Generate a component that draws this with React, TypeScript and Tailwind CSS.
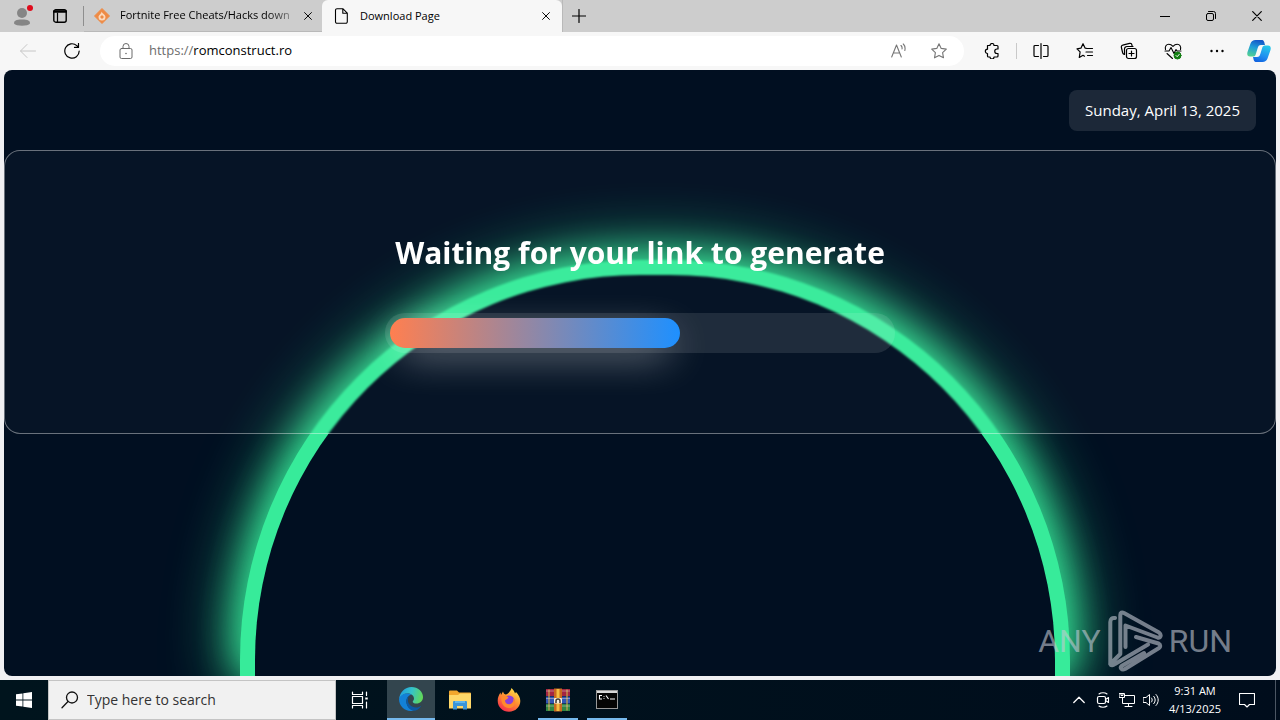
import type { ReactNode } from "react";

interface IconProps {
  size?: number;
  box?: number;
  className?: string;
  children: ReactNode;
}

const Icon = ({ size = 16, box = 16, className = "", children }: IconProps) => (
  <svg
    width={size}
    height={size}
    viewBox={`0 0 ${box} ${box}`}
    fill="none"
    stroke="currentColor"
    strokeWidth="1"
    strokeLinecap="round"
    strokeLinejoin="round"
    aria-hidden="true"
    className={`shrink-0 ${className}`}
  >
    {children}
  </svg>
);

const CloseIcon = ({ size = 8 }: { size?: number }) => (
  <Icon size={size} box={10}>
    <path d="M0.7 0.7l8.6 8.6M9.3 0.7L0.7 9.3" strokeWidth="1.2" />
  </Icon>
);

const toolbarButtons = [
  {
    label: "Split screen",
    icon: (
      <Icon size={18} box={18}>
        <path d="M6.500 3.500H3a1 1 0 0 0-1 1v9a1 1 0 0 0 1 1H6.500M11.500 3.500H15a1 1 0 0 1 1 1v9a1 1 0 0 1-1 1H11.500M9 1.500v15" strokeWidth="1.2" />
      </Icon>
    ),
  },
  {
    label: "Favorites",
    icon: (
      <Icon size={18} box={18}>
        <path d="M11 6.500L9.200 6.200L7 1.700L4.900 6.200L1 6.800l3.100 3.100l-0.800 5.600L7 13.300l1.500 0.900M11.500 6.500h5M10 10h6.500M11.500 13.500h5" strokeWidth="1.2" />
      </Icon>
    ),
  },
  {
    label: "Collections",
    icon: (
      <Icon size={18} box={18}>
        <rect x="6.500" y="6.500" width="10" height="10" rx="2" strokeWidth="1.2" />
        <path d="M11.500 9v5M9 11.500h5M4.500 12.500C3.500 12.300 3 11.800 2.700 11L1.400 5.500a1.800 1.800 0 0 1 1.300-2.300L9.600 1.400a1.800 1.800 0 0 1 2.200 1.300l0.400 1.500M4.500 12.500V7a2.500 2.500 0 0 1 2.500-2.500h6" strokeWidth="1.2" />
      </Icon>
    ),
  },
  {
    label: "Browser essentials",
    icon: (
      <Icon size={18} box={18}>
        <path d="M1.500 7.500C0.700 4.500 2.300 2.300 4.800 2.300C6.800 2.300 8 3.300 9 4.400C10 3.300 11.200 2.300 13.200 2.300C15.700 2.300 17.300 4.500 16.500 7.500M1 9h4l2-3.500l3 6l2-4l1 1.500h4M3 11.500l5.500 5" strokeWidth="1.100" />
        <circle cx="13.500" cy="13.500" r="3.500" fill="#107c10" stroke="#107c10" />
        <path d="M12 13.500l1.200 1.200l2-2.300" stroke="#fff" />
      </Icon>
    ),
  },
  {
    label: "Settings and more",
    icon: (
      <Icon size={14} box={14}>
        <g fill="currentColor" stroke="none">
          <circle cx="1.500" cy="7" r="1.200" />
          <circle cx="7" cy="7" r="1.200" />
          <circle cx="12.500" cy="7" r="1.200" />
        </g>
      </Icon>
    ),
  },
];

const TabStrip = () => (
  <div className="flex h-8 items-stretch bg-[#cdcdcd] text-[11px] text-black">
    <button aria-label="Profile" className="flex w-11 items-center justify-center">
      <svg width="22" height="24" viewBox="0 0 22 24" aria-hidden="true">
        <circle cx="11" cy="9" r="5" fill="#858585" />
        <path d="M3 19.500C3 16.500 5 15.500 11 15.500S19 16.500 19 19.500C17 22.500 5 22.500 3 19.500Z" fill="#858585" />
        <circle cx="19" cy="4" r="3" fill="#e00b1c" />
      </svg>
    </button>
    <button aria-label="Workspaces" className="flex w-8 items-center justify-center">
      <Icon size={14} box={14}>
        <rect x="0.800" y="0.800" width="12.400" height="12.400" rx="2" strokeWidth="1.400" />
        <path d="M1 2.500h12" strokeWidth="2.500" />
        <path d="M4.500 4v9" strokeWidth="1.200" />
      </Icon>
    </button>
    <div className="my-1.5 ml-[7px] w-px bg-[#8e8e8e]" />
    <div className="flex w-[238px] items-center border-b border-[#b9b9b9] px-2.5">
      <svg width="16" height="16" viewBox="0 0 16 16" className="shrink-0" aria-hidden="true">
        <path d="M8 0.500L15.500 8L8 15.500L0.500 8Z" fill="#ee8b46" stroke="#ee8b46" strokeLinejoin="round" />
        <path d="M7.500 3.500C8 5.500 11.500 6.500 11.500 9A3.500 3.500 0 0 1 4.500 9C4.500 7 7.500 6 7.500 3.500Z" fill="#fbd9bd" />
        <path d="M8 7L10 9L8 11L6 9Z" fill="#ee8b46" />
      </svg>
      <span className="ml-2.5 flex-1 whitespace-nowrap [mask-image:linear-gradient(to_right,black_80%,transparent)]">
        Fortnite Free Cheats/Hacks down
      </span>
      <button aria-label="Close tab">
        <CloseIcon />
      </button>
    </div>
    <div className="flex w-[240px] items-center rounded-t-md bg-[#f7f7f7] px-3">
      <Icon size={16}>
        <path d="M3 0.700h5.800l4.500 4.500v8.600a1.500 1.500 0 0 1-1.500 1.500H3a1.500 1.500 0 0 1-1.500-1.500V2.200a1.500 1.500 0 0 1 1.500-1.500ZM8.800 0.700v4.500h4.500" strokeWidth="1.100" />
      </Icon>
      <span className="ml-2.5 flex-1">Download Page</span>
      <button aria-label="Close tab">
        <CloseIcon />
      </button>
    </div>
    <button aria-label="New tab" className="flex w-8 items-center justify-center border-l border-[#b9b9b9]">
      <Icon size={14} box={14}>
        <path d="M7 0.500v13M0.500 7h13" strokeWidth="1.200" />
      </Icon>
    </button>
    <div className="ml-auto flex">
      <button aria-label="Minimize" className="flex w-[46px] items-center justify-center">
        <Icon size={10} box={10}>
          <path d="M0 5.500h10" />
        </Icon>
      </button>
      <button aria-label="Restore" className="flex w-[46px] items-center justify-center">
        <Icon size={10} box={10}>
          <rect x="0.500" y="2.500" width="7" height="7" rx="1.500" />
          <path d="M2.500 0.500H7.500a2 2 0 0 1 2 2V7.500" />
        </Icon>
      </button>
      <button aria-label="Close" className="flex w-[46px] items-center justify-center">
        <CloseIcon size={10} />
      </button>
    </div>
  </div>
);

const Toolbar = () => (
  <div className="flex h-[38px] items-center bg-[#f7f7f7] text-black">
    <button aria-label="Back" disabled className="ml-1.5 flex w-11 justify-center text-[#c6c6c6]">
      <Icon size={16}>
        <path d="M15.500 8H0.800M7 1.500L0.500 8L7 14.500" />
      </Icon>
    </button>
    <button aria-label="Refresh" className="flex w-11 justify-center">
      <Icon size={16}>
        <path d="M15.200 8A7.200 7.200 0 1 1 12.800 2.600L14.500 4.200M14.500 0.500v3.900h-4" strokeWidth="1.200" />
      </Icon>
    </button>
    <div className="ml-1.5 flex h-[30px] flex-1 items-center rounded-full bg-white">
      <Icon size={16} className="ml-[18px] text-[#6b6b6b]">
        <rect x="2" y="5.500" width="12" height="10" rx="1.500" />
        <path d="M5 5.500V3.500a3 3 0 0 1 6 0V5.500" />
        <circle cx="8" cy="10.500" r="0.800" fill="currentColor" stroke="none" />
      </Icon>
      <a href="https://romconstruct.ro" className="ml-[15px] flex-1 text-[13px]">
        <span className="text-[#6d6d6d]">https://</span>romconstruct.ro
      </a>
      <button aria-label="Read aloud" className="flex w-10 justify-center text-[#767676]">
        <Icon size={16}>
          <path d="M0.700 14L5.500 2L10.300 14M2.300 10h6.400M10 2.500c1 1 1.300 2.200 1 3.500M12.300 1c1.700 1.800 2.200 3.800 1.500 6.500" strokeWidth="1.100" />
        </Icon>
      </button>
      <button aria-label="Add to favorites" className="mr-[5px] flex w-10 justify-center text-[#767676]">
        <Icon size={16}>
          <path d="M8 0.800L10.200 5.400L15.300 6.100L11.600 9.700L12.500 14.800L8 12.400L3.500 14.800L4.400 9.700L0.700 6.100L5.800 5.400Z" strokeWidth="1.100" />
        </Icon>
      </button>
    </div>
    <button aria-label="Extensions" className="ml-1.5 flex w-11 justify-center">
      <Icon size={16}>
        <path d="M3.500 2.500H6a2 2 0 0 1 4 0H13a1 1 0 0 1 1 1V6H13a2 2 0 0 0 0 4.500H14V13a1 1 0 0 1-1 1H10a2 2 0 0 1-4 0H4.500a1 1 0 0 1-1-1V10.500a2.100 2.100 0 0 1 0-4.300Z" strokeWidth="1.200" />
      </Icon>
    </button>
    <div className="mx-0.5 h-4 w-px bg-[#c9c9c9]" />
    {toolbarButtons.map((button) => (
      <button key={button.label} aria-label={button.label} className="flex w-11 justify-center">
        {button.icon}
      </button>
    ))}
    <button aria-label="Copilot" className="mr-px flex w-10 justify-center">
      <svg width="24" height="24" viewBox="0 0 24 24" aria-hidden="true">
        <defs>
          <linearGradient id="copilotA" x1="0.500" y1="0" x2="0.200" y2="1">
            <stop offset="0" stopColor="#1459c9" />
            <stop offset="0.450" stopColor="#1f9ed8" />
            <stop offset="1" stopColor="#54d290" />
          </linearGradient>
          <linearGradient id="copilotB" x1="0.700" y1="0" x2="0.300" y2="1">
            <stop offset="0" stopColor="#25c8ea" />
            <stop offset="0.600" stopColor="#1f8ff0" />
            <stop offset="1" stopColor="#1264e0" />
          </linearGradient>
        </defs>
        <path d="M8.500 1H14.500C17 1 17.300 3 18 6H14C12 6 11.300 7 10.700 9L8.500 16C8 17 7 17.500 5.500 17.500H3C0.500 17.500-0.200 15.500 0.500 13L3.500 4.500C4.300 2.200 6 1 8.500 1Z" fill="url(#copilotA)" />
        <path d="M15.500 23H9.500C7 23 6.700 21 6 18H10C12 18 12.700 17 13.300 15L15.500 8C16 7 17 6.500 18.500 6.500H21C23.500 6.500 24.200 8.500 23.500 11L20.500 19.500C19.700 21.800 18 23 15.500 23Z" fill="url(#copilotB)" />
      </svg>
    </button>
  </div>
);

const Watermark = () => (
  <div className="absolute bottom-1 right-11 flex items-center gap-1.5 font-[Roboto,sans-serif] text-[32px] leading-none text-[#c3c8d2]/60">
    <span>ANY</span>
    <svg
      width="56"
      height="62"
      viewBox="0 0 56 62"
      fill="none"
      stroke="currentColor"
      strokeWidth="4"
      strokeLinecap="round"
      strokeLinejoin="round"
      aria-hidden="true"
    >
      <path d="M8 8C5 7.500 3.300 9 3.300 12V54C4 56 6 55.500 8 54L41 34.500M3.300 54L13.300 44V5C13.300 2.500 15 2 17 3L52 22.500C55 25 53.500 28.500 50.500 27.500L18.500 15.500V37M29 27L51.500 33.500C54 35 53.500 37 52 38L18 59C14.500 60.500 12.500 57.500 14.500 56L37 43" />
    </svg>
    <span>RUN</span>
  </div>
);

const DownloadPage = () => (
  <main className="relative mx-1 mb-1 flex-1 overflow-hidden rounded-lg bg-[#010f21] text-white">
    <div className="absolute bottom-0 left-1/2 -ml-[400px] h-[416px] w-[830px] rounded-t-[400px] border-[15px] border-b-0 border-[#37eb9a] bg-[#010f21] shadow-[0_0_40px_#37eb9a,0_0_70px_#37eb9a]" />
    <div className="relative flex h-20 items-start justify-end p-5">
      <time dateTime="2025-04-13" className="rounded-lg bg-[#1c2838] px-4 py-2 text-[15px] leading-[25px]">
        Sunday, April 13, 2025
      </time>
    </div>
    <section className="relative flex h-[284px] flex-col items-center rounded-2xl border border-white/40 bg-white/[0.025] backdrop-blur-[1px]">
      <h1 className="mt-20 text-[30px] font-bold leading-[44px]">Waiting for your link to generate</h1>
      <div className="mt-[38px] h-10 w-[510px] rounded-full bg-white/10 p-[5px]" role="progressbar" aria-label="Link progress" aria-valuenow={58} aria-valuemin={0} aria-valuemax={100}>
        <div
          className="h-full rounded-full bg-linear-to-r/srgb from-[#ff7f50] to-[#1e90ff] shadow-[0_12px_40px_-10px_#fff]"
          style={{ width: "58%" }}
        />
      </div>
    </section>
    <Watermark />
  </main>
);

const Taskbar = () => (
  <footer className="flex h-10 items-stretch bg-linear-to-r from-[#00141d] to-[#000d1c] text-white">
    <button aria-label="Start" className="flex w-12 items-center justify-center">
      <svg width="16" height="16" viewBox="0 0 16 16" fill="currentColor" aria-hidden="true">
        <path d="M0 2.300L6.500 1.400V7.600H0ZM7.300 1.300L16 0V7.600H7.300ZM0 8.400H6.500V14.600L0 13.700ZM7.300 8.400H16V16L7.300 14.700Z" />
      </svg>
    </button>
    <label className="flex w-72 items-center border border-[#c4c4c4] bg-[#f1f1f1] pl-3 text-[#111]">
      <Icon size={18} box={18}>
        <circle cx="11" cy="6.500" r="5.500" strokeWidth="1.300" />
        <path d="M7 10.500L1 16.800" strokeWidth="1.300" />
      </Icon>
      <input
        type="text"
        aria-label="Search"
        placeholder="Type here to search"
        className="ml-2 w-full bg-transparent text-sm outline-none placeholder:text-[#333]"
      />
    </label>
    <button aria-label="Task view" className="mr-[3px] flex w-12 items-center justify-center">
      <Icon size={18} box={18}>
        <path d="M1.500 1v2.500h10V1M1.500 17v-2.500h10V17M1.500 5.500h10v7h-10ZM15.500 1v3.500M15.500 11v6" strokeWidth="1.200" />
        <path d="M15.500 6.500v2" strokeWidth="2.500" strokeLinecap="butt" />
      </Icon>
    </button>
    <div className="flex gap-px">
      <button aria-label="Microsoft Edge" className="flex w-12 items-center justify-center border-b-2 border-[#76b9ed] bg-[#33454e]">
        <svg width="24" height="24" viewBox="0 0 24 24" aria-hidden="true">
          <defs>
            <linearGradient id="edgeTop" x1="0" y1="0.300" x2="1" y2="0.500">
              <stop offset="0" stopColor="#1f9de0" />
              <stop offset="0.500" stopColor="#35c3c9" />
              <stop offset="1" stopColor="#62d957" />
            </linearGradient>
          </defs>
          <path d="M0.200 12C0.700 5 6 0 12.500 0C19 0 24 4.800 24 10C24 14 21 16.500 17.500 16.500C15 16.500 13.700 15.500 13.700 14.700C13.700 14 15 13.500 15 11.500C15 8.500 12 6.500 8.500 6.500C5 6.500 2 8.500 0.200 12Z" fill="url(#edgeTop)" />
          <path d="M0 12C1 8.500 4.500 6.500 8.500 6.500C10 6.500 11.300 6.900 12.300 7.500C9.300 8.300 7.300 11 7.300 14.300C7.300 18 10 22.500 15 23.600C7 25.500 0 20 0 12Z" fill="#1381d7" />
          <path d="M9 11.500C8 17 12.500 20.500 17 20.500C19.500 20.500 21 19.500 22.300 18.700C20.500 21.700 17.700 23.700 14.500 23.800C9.500 22.500 7.300 18 7.300 14.300C7.300 12.500 8.200 10 10 8.700C9.500 9.500 9.100 10.500 9 11.500Z" fill="#0c59a4" />
        </svg>
      </button>
      <button aria-label="File Explorer" className="flex w-12 items-center justify-center">
        <svg width="22" height="20" viewBox="0 0 22 20" aria-hidden="true">
          <path d="M0 1.500Q0 0.500 1 0.500H8L10 2.500H21Q22 2.500 22 3.500V18H0Z" fill="#f2a72d" />
          <path d="M0 5H9L11 3.500H22V18.500H0Z" fill="#ffd869" />
          <path d="M4 19.500V12Q4 11 5 11H17Q18 11 18 12V19.500H14V16H8V19.500Z" fill="#3a95d8" />
          <path d="M6 11h10v2H6Z" fill="#5fb6ec" />
        </svg>
      </button>
      <button aria-label="Firefox" className="flex w-12 items-center justify-center">
        <svg width="24" height="24" viewBox="0 0 24 24" aria-hidden="true">
          <defs>
            <linearGradient id="foxFire" x1="0.800" y1="0" x2="0.200" y2="1">
              <stop offset="0" stopColor="#ffe84a" />
              <stop offset="0.450" stopColor="#ff9332" />
              <stop offset="1" stopColor="#f5264d" />
            </linearGradient>
          </defs>
          <path d="M14.500 0C16.500 2 17.500 3.500 18 5.500L19 4C21.500 6.500 23.300 9.500 23.300 13C23.300 19 18.300 23.700 12 23.700S0.700 19 0.700 12.700C0.700 9.500 2 6.500 3.500 4.500L4 7L6 3.500C6.500 5 7 6 8.500 6.500C11 6 13.500 3.500 14.500 0Z" fill="url(#foxFire)" />
          <circle cx="12" cy="13" r="5.500" fill="#8b3fd9" />
          <path d="M4.500 8.500C7 7 9.500 7.500 11.500 9.500C10.500 11.500 9 11 8 12.500C8 15 10.500 17 13.500 16C16 15 17 13 16 10C20 13 18 20 12 20C6.500 20 3.500 14.500 4.500 8.500Z" fill="#ff8a2c" />
        </svg>
      </button>
      <button aria-label="WinRAR" className="flex w-12 flex-col items-center">
        <svg width="24" height="24" viewBox="0 0 24 24" className="mb-1.5 mt-2" aria-hidden="true">
          <path d="M0 1h24v7H0Z" fill="#a42543" />
          <path d="M0 8.500h24v7H0Z" fill="#3156b4" />
          <path d="M0 16h24v7H0Z" fill="#2e8544" />
          <path d="M2 1.500h2v21H2ZM20 1.500h2v21h-2Z" fill="#c9a64a" opacity="0.600" />
          <path d="M0 3h24M0 10.500h24M0 18h24" stroke="#e5d7d0" strokeWidth="0.800" opacity="0.600" />
          <path d="M8 0.500h8V23.500H8Z" fill="#c8691f" />
          <path d="M10.500 1h3v22h-3Z" fill="#f4bd43" />
          <rect x="8" y="10" width="8" height="5.500" rx="1" fill="#f4eee0" />
          <path d="M10 15V13a2 2 0 0 1 4 0V15" fill="none" stroke="#433b32" strokeWidth="1.500" />
        </svg>
        <span className="h-0.5 w-10 bg-[#76b9ed]" />
      </button>
      <button aria-label="Command Prompt" className="flex w-12 flex-col items-center">
        <svg width="22" height="24" viewBox="0 0 22 24" className="mb-1.5 mt-2" aria-hidden="true">
          <rect x="0.500" y="2.500" width="21" height="18" fill="#050505" stroke="#989898" />
          <path d="M1 3h20v2H1Z" fill="#d9d9d9" />
          <path d="M6 7.500H3.500V11H6M8 8v0.800M8 10.200v0.800M10 7.500L12.500 11M14 11h5" fill="none" stroke="#fff" strokeWidth="1.100" />
        </svg>
        <span className="h-0.5 w-10 bg-[#76b9ed]" />
      </button>
    </div>
    <div className="ml-auto flex items-stretch">
      <button aria-label="Show hidden icons" className="flex w-6 items-center justify-center">
        <Icon size={12} box={12}>
          <path d="M0.800 8.500L6 3.300L11.200 8.500" strokeWidth="1.300" />
        </Icon>
      </button>
      <button aria-label="Meet now" className="flex w-6 items-center justify-center">
        <Icon size={16}>
          <rect x="2.500" y="4.500" width="8" height="7" rx="1.500" strokeWidth="1.200" />
          <path d="M10.500 7.500l3-2v5l-3-2M4 2C6 0.300 10 0.300 12 2M4 14C6 15.700 10 15.700 12 14" strokeWidth="1.100" />
        </Icon>
      </button>
      <button aria-label="Network" className="flex w-6 items-center justify-center">
        <Icon size={16}>
          <path d="M5.500 3.500H15.500V11.500H3.500V7M9.500 11.500v3M6 14.500h7M0.500 1.500h5v4h-5ZM2 1.500v2h2v-2M3.500 5.500v2" />
        </Icon>
      </button>
      <button aria-label="Volume" className="flex w-6 items-center justify-center">
        <Icon size={16}>
          <path d="M0.500 5.500H3L6.500 2.500V13.500L3 10.500H0.500ZM8.500 6c1 1.200 1 2.800 0 4M10.700 4.300c2 2.200 2 5.200 0 7.400M13 2.500c3 3.300 3 7.700 0 11" />
        </Icon>
      </button>
      <button className="w-16 text-center text-[11px] leading-[18px]">
        <span className="block">9:31 AM</span>
        <span className="block">4/13/2025</span>
      </button>
      <button aria-label="Notifications" className="mr-2 flex w-10 items-center justify-center">
        <Icon size={16}>
          <path d="M0.500 1.500h15v11H10.500L8 15L5.500 12.500H0.500Z" strokeWidth="1.100" />
        </Icon>
      </button>
      <button aria-label="Show desktop" className="w-[5px] border-l border-[#4b5663]" />
    </div>
  </footer>
);

const App = () => {
  return (
    <div className="flex min-h-screen flex-col bg-[#f0f0f3] font-['Open_Sans',sans-serif]">
      <TabStrip />
      <Toolbar />
      <DownloadPage />
      <Taskbar />
    </div>
  );
};

export default App;
